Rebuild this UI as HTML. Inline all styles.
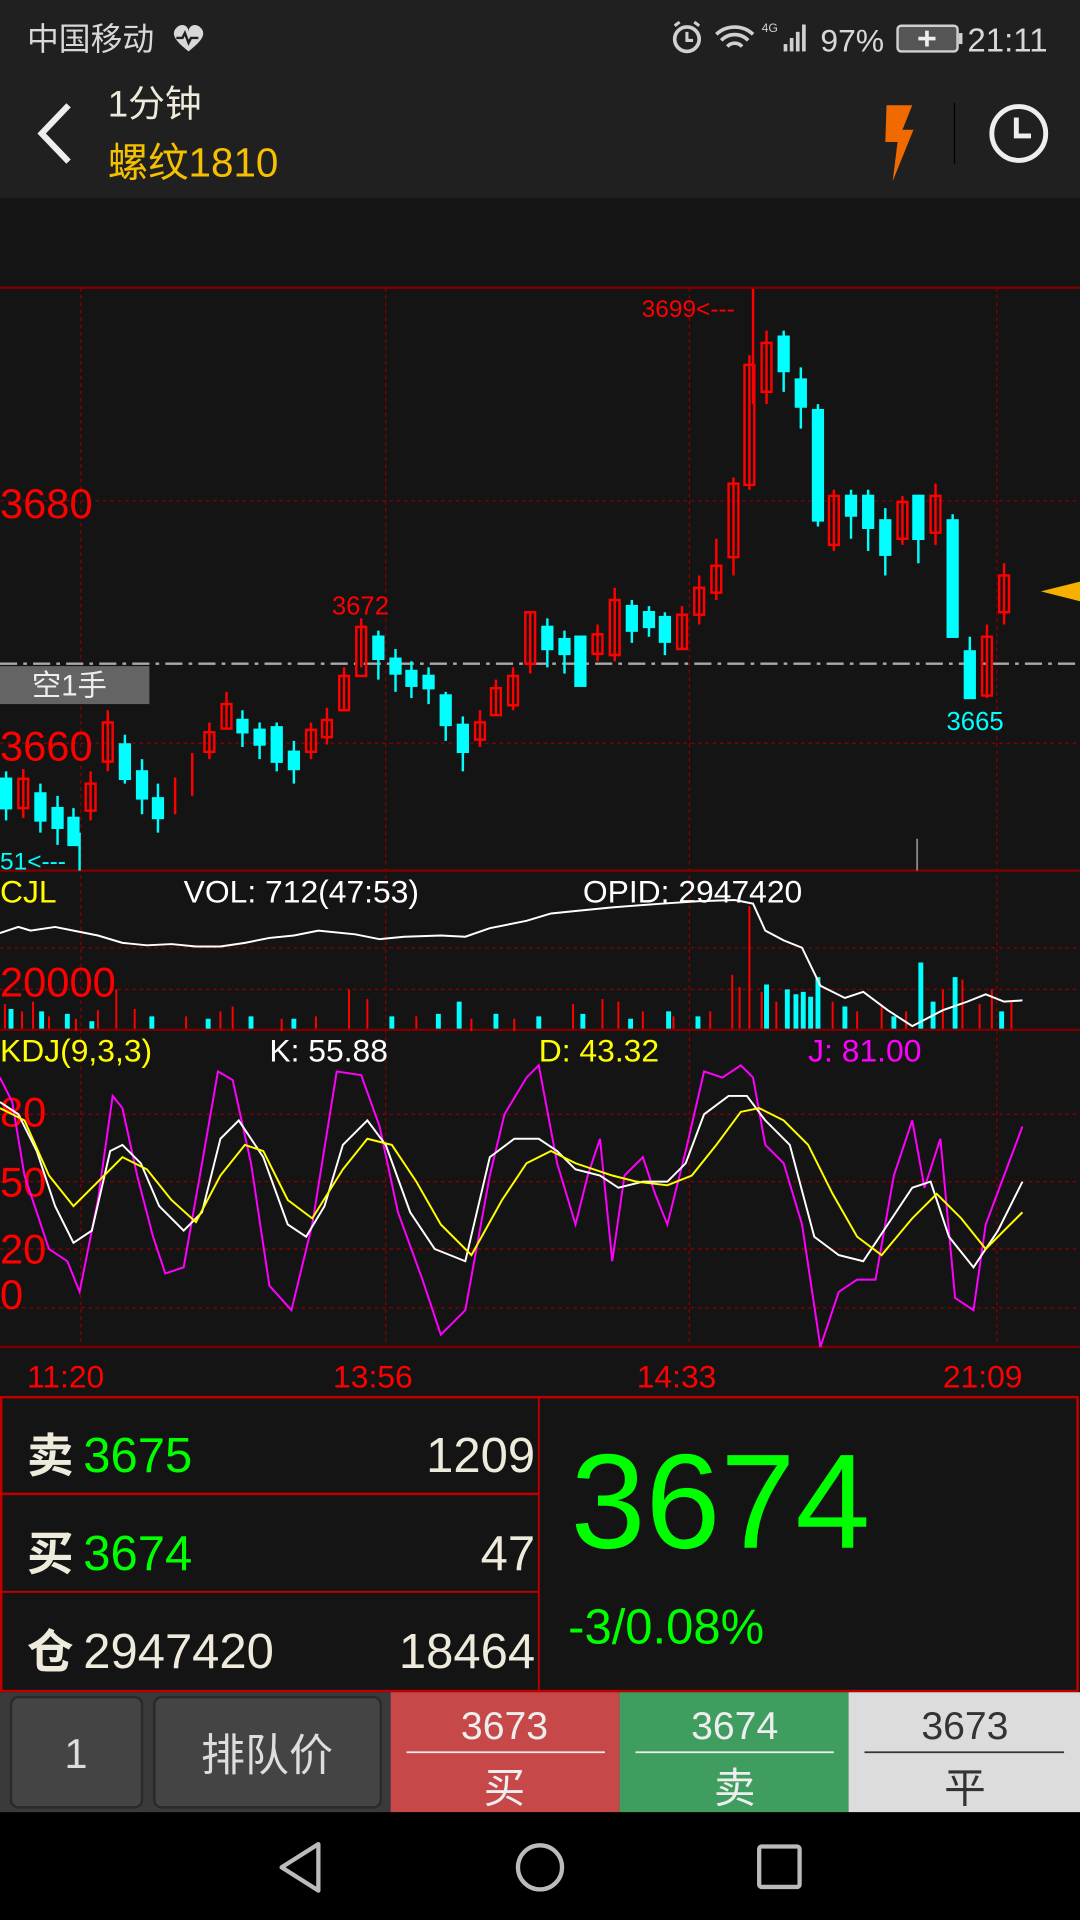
<!DOCTYPE html>
<html><head><meta charset="utf-8"><style>
html,body{margin:0;padding:0;background:#141414;}
svg{display:block}
text{font-family:"Liberation Sans","Noto Sans CJK SC",sans-serif;}
</style></head><body>
<svg width="1080" height="1920" viewBox="0 0 882 1568" xmlns="http://www.w3.org/2000/svg">
<rect width="882" height="1568" fill="#141414"/>
<!-- status + header -->
<rect width="882" height="162" fill="#202020"/>
<text x="22" y="41" font-size="26" fill="#d8d8d8">中国移动</text>
<path d="M143 24c4-6 11-4 11 2c0-6 7-8 11-2c3 5-1 10-11 18c-10-8-14-13-11-18z" fill="#d8d8d8"/>
<path d="M144 31h5l2-4 3 8 2-4h6" stroke="#202020" stroke-width="2" fill="none"/>
<circle cx="561" cy="32" r="10" stroke="#d0d0d0" stroke-width="3" fill="none"/>
<path d="M561 26v7h5M551 21l4-3M571 21l-4-3" stroke="#d0d0d0" stroke-width="2.5" fill="none"/>
<path d="M585 28a22 22 0 0 1 30 0M589 33a15 15 0 0 1 22 0M594 38a8 8 0 0 1 12 0" stroke="#d0d0d0" stroke-width="3" fill="none"/>
<text x="622" y="26" font-size="10" fill="#d0d0d0">4G</text>
<rect x="640" y="36" width="3" height="6" fill="#d0d0d0"/><rect x="645" y="31" width="3" height="11" fill="#d0d0d0"/><rect x="650" y="26" width="3" height="16" fill="#d0d0d0"/><rect x="655" y="20" width="3" height="22" fill="#d0d0d0"/>
<text x="670" y="42" font-size="26" fill="#d8d8d8">97%</text>
<rect x="733" y="21" width="49" height="21" rx="3" stroke="#d0d0d0" stroke-width="2" fill="#555"/><rect x="783" y="27" width="3" height="9" fill="#d0d0d0"/>
<path d="M757 25v13M750 31.5h14" stroke="#eee" stroke-width="3"/>
<text x="790" y="42" font-size="27" fill="#d8d8d8">21:11</text>
<path d="M56 86l-22 23 22 23" stroke="#eee" stroke-width="5" fill="none"/>
<text x="88" y="95" font-size="30" fill="#eeeadc">1分钟</text>
<text x="88" y="144" font-size="33" fill="#f5c000">螺纹1810</text>
<path d="M724 86h21l-8 20h9l-17 42 4-32h-10z" fill="#f06a00"/>
<rect x="779" y="84" width="1" height="50" fill="#000"/>
<circle cx="832" cy="109" r="22" stroke="#eee" stroke-width="4" fill="none"/>
<path d="M830 96v15h12" stroke="#eee" stroke-width="4" fill="none"/>
<!-- main chart grid -->
<g stroke="#8a0000" stroke-width="1">
<line x1="0" y1="235" x2="882" y2="235" stroke="#7a0000" stroke-width="2"/>
<line x1="0" y1="409" x2="882" y2="409" stroke-dasharray="3,3"/>
<line x1="0" y1="607" x2="882" y2="607" stroke-dasharray="3,3"/>
<line x1="66" y1="235" x2="66" y2="1100" stroke-dasharray="3,3"/>
<line x1="315" y1="235" x2="315" y2="1100" stroke-dasharray="3,3"/>
<line x1="563" y1="235" x2="563" y2="1100" stroke-dasharray="3,3"/>
<line x1="814" y1="235" x2="814" y2="1100" stroke-dasharray="3,3"/>
<line x1="0" y1="711" x2="882" y2="711" stroke="#7a0000" stroke-width="2"/>
<line x1="0" y1="841" x2="882" y2="841" stroke="#7a0000" stroke-width="2"/>
<line x1="0" y1="1100" x2="882" y2="1100" stroke="#7a0000" stroke-width="2"/>
<line x1="0" y1="774" x2="882" y2="774" stroke-dasharray="3,3"/>
<line x1="0" y1="808" x2="882" y2="808" stroke-dasharray="3,3"/>
<line x1="0" y1="910" x2="882" y2="910" stroke-dasharray="3,3"/>
<line x1="0" y1="965" x2="882" y2="965" stroke-dasharray="3,3"/>
<line x1="0" y1="1020" x2="882" y2="1020" stroke-dasharray="3,3"/>
<line x1="0" y1="1068" x2="882" y2="1068" stroke-dasharray="3,3"/>
</g>
<line x1="0" y1="542" x2="882" y2="542" stroke="#aaa" stroke-width="2" stroke-dasharray="14,5,3,5"/>
<rect x="0" y="544" width="122" height="31" fill="#646464"/>
<text x="26" y="568" font-size="24" fill="#eee">空1手</text>
<text x="0" y="423" font-size="34" fill="#f00">3680</text>
<text x="0" y="621" font-size="34" fill="#f00">3660</text>
<text x="524" y="259" font-size="20" fill="#f00">3699&lt;---</text>
<line x1="615" y1="236" x2="615" y2="330" stroke="#f00" stroke-width="2"/>
<text x="271" y="502" font-size="21" fill="#f00">3672</text>
<text x="773" y="596" font-size="21" fill="#0ff">3665</text>
<text x="0" y="710" font-size="20" fill="#0ff">51&lt;---</text>
<line x1="65" y1="680" x2="65" y2="711" stroke="#0ff" stroke-width="2"/>
<line x1="749" y1="685" x2="749" y2="711" stroke="#888" stroke-width="1.5"/>
<path d="M850 483l32-8v16z" fill="#f5b000"/>
<!-- candles -->
<g stroke="#f00" stroke-width="2" fill="none">
<path d="M19 628v40M74 630v40M88 580v50M143 635v30M157 615v35M171 590v30M185 565v30M254 590v30M267 578v30M281 545v35M295 505v40M392 580v30M405 555v30M419 545v35M433 500v50M488 510v30M502 480v60M557 495v35M571 470v40M585 440v50M599 390v80M612 290v110M626 270v60M681 400v50M737 405v40M764 395v50M806 510v60M820 460v50"/>
<rect x="15" y="636" width="8" height="24"/><rect x="70" y="640" width="8" height="22"/><rect x="84" y="590" width="8" height="32"/><rect x="167" y="598" width="8" height="16"/><rect x="181" y="575" width="8" height="20"/><rect x="250" y="596" width="8" height="18"/><rect x="263" y="588" width="8" height="14"/><rect x="277" y="552" width="8" height="28"/><rect x="291" y="512" width="8" height="40"/><rect x="388" y="590" width="8" height="14"/><rect x="401" y="562" width="8" height="22"/><rect x="415" y="552" width="8" height="24"/><rect x="429" y="500" width="8" height="42"/><rect x="484" y="518" width="8" height="16"/><rect x="498" y="490" width="8" height="45"/><rect x="553" y="502" width="8" height="28"/><rect x="567" y="480" width="8" height="22"/><rect x="581" y="462" width="8" height="22"/><rect x="595" y="395" width="8" height="60"/><rect x="608" y="298" width="8" height="98"/><rect x="622" y="280" width="8" height="40"/><rect x="677" y="405" width="8" height="40"/><rect x="733" y="410" width="8" height="30"/><rect x="760" y="405" width="8" height="30"/><rect x="802" y="520" width="8" height="48"/><rect x="816" y="470" width="8" height="30"/>
</g>
<g stroke="#0ff" stroke-width="2" fill="#0ff">
<path d="M5 630v40M33 640v40M47 650v40M60 660v30M102 600v40M116 620v45M129 640v40M198 580v30M212 590v30M226 590v40M240 605v35M309 515v40M323 530v35M336 540v30M350 545v30M364 565v40M378 585v45M447 505v40M461 515v35M474 520v40M516 490v35M530 495v25M543 500v35M640 270v50M654 300v50M668 330v100M695 400v40M709 400v50M723 415v55M750 410v50M778 420v100M792 520v50"/>
<rect x="1" y="636" width="8" height="24"/><rect x="29" y="648" width="8" height="22"/><rect x="43" y="660" width="8" height="16"/><rect x="56" y="668" width="8" height="22"/><rect x="98" y="608" width="8" height="28"/><rect x="112" y="630" width="8" height="22"/><rect x="125" y="652" width="8" height="16"/><rect x="194" y="588" width="8" height="10"/><rect x="208" y="596" width="8" height="12"/><rect x="222" y="594" width="8" height="28"/><rect x="236" y="614" width="8" height="14"/><rect x="305" y="520" width="8" height="18"/><rect x="319" y="538" width="8" height="12"/><rect x="332" y="548" width="8" height="12"/><rect x="346" y="552" width="8" height="10"/><rect x="360" y="568" width="8" height="24"/><rect x="374" y="592" width="8" height="22"/><rect x="443" y="512" width="8" height="18"/><rect x="457" y="522" width="8" height="12"/><rect x="470" y="520" width="8" height="40"/><rect x="512" y="495" width="8" height="20"/><rect x="526" y="500" width="8" height="12"/><rect x="539" y="504" width="8" height="20"/><rect x="636" y="275" width="8" height="28"/><rect x="650" y="310" width="8" height="22"/><rect x="664" y="335" width="8" height="90"/><rect x="691" y="405" width="8" height="16"/><rect x="705" y="405" width="8" height="26"/><rect x="719" y="425" width="8" height="28"/><rect x="746" y="405" width="8" height="35"/><rect x="774" y="425" width="8" height="95"/><rect x="788" y="532" width="8" height="38"/>
</g>
<!-- CJL -->
<text x="0" y="737" font-size="26" fill="#ff0">CJL</text>
<text x="150" y="737" font-size="26" fill="#fff">VOL: 712(47:53)</text>
<text x="476" y="737" font-size="26" fill="#fff">OPID: 2947420</text>
<text x="0" y="814" font-size="34" fill="#f00">20000</text>
<g fill="none" stroke="#f00" stroke-width="1.6">
<path d="M4 820v20M18 826v14M27 818v22M40 830v10M62 832v10M80 825v15M95 808v32M110 824v16M152 830v10M180 826v14M190 822v18M230 832v10M258 830v10M285 808v32M300 816v24M340 830v10M385 832v10M420 832v10M468 820v20M492 816v24M505 818v22M525 826v14M550 830v10M580 826v14M598 796v44M604 806v34M612 740v100M622 810v30M634 818v22M680 818v22M700 826v14M720 822v18M740 826v14M770 808v32M786 800v40M800 820v20M810 808v32M826 818v22"/>
</g>
<g stroke="#0ff" stroke-width="4">
<path d="M9 824v16M34 826v14M55 828v12M75 834v6M124 830v10M170 832v8M205 830v10M240 832v8M320 830v10M358 828v12M375 818v22M405 828v12M440 830v10M476 828v12M515 832v8M546 826v14M570 830v10M626 804v36M643 808v32M650 812v28M656 810v30M662 814v26M668 798v42M690 822v18M730 830v10M752 786v54M762 818v22M780 798v42M818 826v14"/>
</g>
<polyline fill="none" stroke="#fff" stroke-width="1.6" points="0,762 15,757 25,760 45,757 60,760 80,764 100,770 120,772 140,771 160,773 180,773 200,770 220,766 240,764 260,760 290,763 310,767 330,765 360,764 380,765 400,758 430,752 450,746 470,744 500,741 540,738 570,736 600,735 615,738 625,760 640,768 655,774 670,805 690,815 705,810 725,825 745,838 770,825 790,818 805,812 820,818 835,817"/>
<!-- KDJ -->
<text x="0" y="867" font-size="26" fill="#ff0">KDJ(9,3,3)</text>
<text x="220" y="867" font-size="26" fill="#fff">K: 55.88</text>
<text x="440" y="867" font-size="26" fill="#ff0">D: 43.32</text>
<text x="660" y="867" font-size="26" fill="#f0f">J: 81.00</text>
<text x="0" y="920" font-size="34" fill="#f00">80</text>
<text x="0" y="977" font-size="34" fill="#f00">50</text>
<text x="0" y="1032" font-size="34" fill="#f00">20</text>
<text x="0" y="1069" font-size="34" fill="#f00">0</text>
<polyline fill="none" stroke="#f0f" stroke-width="1.6" points="0,880 10,900 20,960 40,1020 55,1030 65,1055 80,980 92,895 100,905 112,960 125,1010 135,1040 150,1035 165,950 178,875 190,882 205,950 220,1050 238,1070 255,1000 275,875 295,878 310,920 325,990 345,1045 360,1090 380,1070 400,960 412,910 430,880 440,870 455,950 470,1000 480,960 490,930 500,1030 510,960 525,945 535,975 545,1000 560,940 575,875 590,880 605,870 615,880 625,935 640,950 655,1000 670,1100 685,1055 700,1045 715,1045 730,960 745,915 755,970 768,930 780,1060 795,1070 805,1000 820,960 835,920"/>
<polyline fill="none" stroke="#fff" stroke-width="1.6" points="0,900 15,910 30,940 45,985 60,1015 75,1005 90,940 100,935 115,950 130,985 150,1005 165,990 180,930 195,915 215,945 235,1000 250,1010 265,985 280,935 300,915 315,935 335,990 355,1020 380,1030 400,945 420,930 440,930 455,940 470,955 490,960 505,970 525,965 545,965 560,950 575,910 595,895 610,895 625,915 645,935 665,1010 685,1025 705,1030 725,1000 745,970 760,965 775,1010 795,1035 815,1005 835,965"/>
<polyline fill="none" stroke="#ff0" stroke-width="1.6" points="0,905 20,915 40,960 60,985 80,965 100,945 120,955 140,980 160,998 180,960 200,935 215,940 235,980 255,995 280,955 300,930 320,935 340,965 360,1000 385,1025 410,980 430,950 450,940 470,950 500,960 520,965 545,968 565,960 585,935 605,908 620,905 640,915 660,935 680,975 700,1010 720,1025 745,995 765,975 785,995 805,1020 820,1005 835,990"/>
<!-- time labels -->
<text x="22" y="1133" font-size="26" fill="#f00">11:20</text>
<text x="272" y="1133" font-size="26" fill="#f00">13:56</text>
<text x="520" y="1133" font-size="26" fill="#f00">14:33</text>
<text x="770" y="1133" font-size="26" fill="#f00">21:09</text>
<!-- quote panel -->
<rect x="1" y="1141" width="879" height="240" fill="#141414" stroke="#c00000" stroke-width="2"/>
<line x1="440" y1="1141" x2="440" y2="1381" stroke="#c00000" stroke-width="1.5"/>
<line x1="1" y1="1220" x2="440" y2="1220" stroke="#c00000" stroke-width="2"/>
<line x1="1" y1="1300" x2="440" y2="1300" stroke="#c00000" stroke-width="1.5"/>
<text x="22" y="1202" font-size="38" font-weight="bold" fill="#eeeadc">卖</text><text x="68" y="1202" font-size="40" fill="#0f0">3675</text>
<text x="437" y="1202" font-size="40" fill="#eeeadc" text-anchor="end">1209</text>
<text x="22" y="1282" font-size="38" font-weight="bold" fill="#eeeadc">买</text><text x="68" y="1282" font-size="40" fill="#0f0">3674</text>
<text x="437" y="1282" font-size="40" fill="#eeeadc" text-anchor="end">47</text>
<text x="22" y="1362" font-size="38" font-weight="bold" fill="#eeeadc">仓</text><text x="68" y="1362" font-size="40" fill="#eeeadc">2947420</text>
<text x="437" y="1362" font-size="40" fill="#eeeadc" text-anchor="end">18464</text>
<text x="466" y="1264" font-size="110" fill="#0f0">3674</text>
<text x="464" y="1342" font-size="40" fill="#0f0">-3/0.08%</text>
<!-- buttons -->
<rect x="0" y="1382" width="319" height="98" fill="#3a3a3a"/>
<rect x="9" y="1386" width="107" height="90" rx="6" fill="#444" stroke="#2a2a2a" stroke-width="2"/>
<rect x="126" y="1386" width="185" height="90" rx="6" fill="#444" stroke="#2a2a2a" stroke-width="2"/>
<text x="62" y="1444" font-size="34" fill="#ddd" text-anchor="middle">1</text>
<text x="218" y="1446" font-size="36" fill="#ddd" text-anchor="middle">排队价</text>
<rect x="319" y="1382" width="187" height="98" fill="#c64848"/>
<rect x="506" y="1382" width="187" height="98" fill="#3f9e5f"/>
<rect x="693" y="1382" width="189" height="98" fill="#dcdcdc"/>
<line x1="332" y1="1431" x2="494" y2="1431" stroke="#eee" stroke-width="1.5"/>
<line x1="519" y1="1431" x2="681" y2="1431" stroke="#eee" stroke-width="1.5"/>
<line x1="706" y1="1431" x2="869" y2="1431" stroke="#333" stroke-width="1.5"/>
<text x="412" y="1420" font-size="32" fill="#eee" text-anchor="middle">3673</text>
<text x="412" y="1472" font-size="34" fill="#eee" text-anchor="middle">买</text>
<text x="600" y="1420" font-size="32" fill="#eee" text-anchor="middle">3674</text>
<text x="600" y="1472" font-size="34" fill="#eee" text-anchor="middle">卖</text>
<text x="788" y="1420" font-size="32" fill="#333" text-anchor="middle">3673</text>
<text x="788" y="1472" font-size="34" fill="#333" text-anchor="middle">平</text>
<!-- nav -->
<rect x="0" y="1480" width="882" height="88" fill="#000"/>
<path d="M260 1506l-30 19 30 19z" fill="none" stroke="#bbb" stroke-width="3.5" stroke-linejoin="round"/>
<ellipse cx="441" cy="1525" rx="18" ry="18" fill="none" stroke="#bbb" stroke-width="3.5"/>
<rect x="620" y="1508" width="33" height="33" rx="2" fill="none" stroke="#bbb" stroke-width="3.5"/>
</svg>
</body></html>
